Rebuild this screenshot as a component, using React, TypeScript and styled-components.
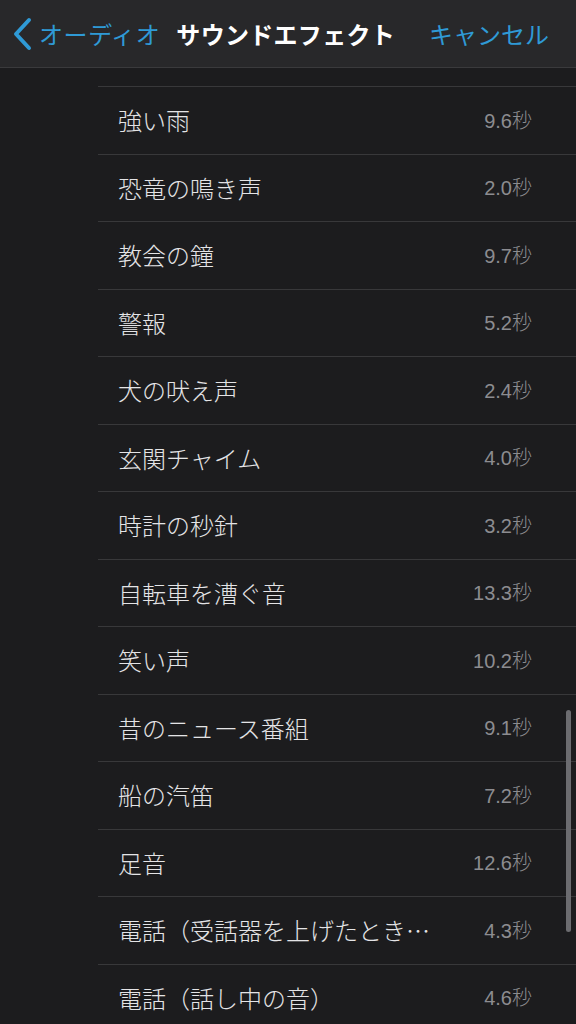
import React from "react";
import styled, { createGlobalStyle } from "styled-components";

const GlobalStyle = createGlobalStyle`
  html, body {
    margin: 0;
    padding: 0;
    background: #1c1c1e;
  }
  body {
    font-family: "Noto Sans CJK JP", "Noto Sans", sans-serif;
    -webkit-font-smoothing: antialiased;
  }
`;

const Screen = styled.div`
  position: relative;
  width: 576px;
  height: 1024px;
  overflow: hidden;
  background: #1c1c1e;
  display: flex;
  flex-direction: column;
`;

const NavBar = styled.header`
  height: 67px;
  flex: 0 0 auto;
  display: flex;
  align-items: center;
  background: #28282a;
  border-bottom: 1px solid #3a3a3c;
  padding: 0 27px 0 12px;
`;

const BackButton = styled.div`
  display: flex;
  align-items: center;
  gap: 5px;
  color: #2f9ad6;
  font-size: 24px;
  font-weight: 400;
  letter-spacing: 0.6px;
  line-height: 1.3;
`;

const Title = styled.div`
  color: #ffffff;
  font-size: 24px;
  font-weight: 700;
  line-height: 1.3;
  letter-spacing: 0.3px;
  margin-left: 16px;
`;

const NavAction = styled.div`
  margin-left: auto;
  color: #2f9ad6;
  font-size: 24px;
  line-height: 1.3;
`;

const List = styled.ul`
  list-style: none;
  margin: 0;
  padding: 18px 0 0 98px;
`;

const Row = styled.li`
  height: 67.5px;
  box-sizing: border-box;
  border-top: 1px solid #38383a;
  display: flex;
  align-items: center;
  padding: 0 44px 0 20px;
  gap: 16px;
`;

const Name = styled.span`
  flex: 1;
  min-width: 0;
  white-space: nowrap;
  overflow: hidden;
  text-overflow: ellipsis;
  color: #e4e4e6;
  font-size: 24px;
  font-weight: 300;
  line-height: 1.4;
`;

const Duration = styled.span`
  flex: 0 0 auto;
  min-width: 70px;
  text-align: right;
  color: #8c8c90;
  font-size: 20px;
  line-height: 1.3;
  font-family: "Liberation Sans", "Noto Sans CJK JP", sans-serif;
`;

const Sec = styled.span`
  font-family: "Noto Sans CJK JP", sans-serif;
  font-weight: 300;
`;

const ScrollThumb = styled.div`
  position: absolute;
  right: 5px;
  top: 710px;
  width: 5px;
  height: 222px;
  border-radius: 3px;
  background: #6c6c70;
`;

const Chevron = () => (
  <svg width="22" height="34" viewBox="0 0 22 34" fill="none">
    <path
      d="M17 3 L4 17 L17 31"
      stroke="#2f9ad6"
      strokeWidth="4"
      strokeLinecap="round"
      strokeLinejoin="round"
    />
  </svg>
);

const items: [string, string][] = [
  ["強い雨", "9.6"],
  ["恐竜の鳴き声", "2.0"],
  ["教会の鐘", "9.7"],
  ["警報", "5.2"],
  ["犬の吠え声", "2.4"],
  ["玄関チャイム", "4.0"],
  ["時計の秒針", "3.2"],
  ["自転車を漕ぐ音", "13.3"],
  ["笑い声", "10.2"],
  ["昔のニュース番組", "9.1"],
  ["船の汽笛", "7.2"],
  ["足音", "12.6"],
  ["電話（受話器を上げたときの音）", "4.3"],
  ["電話（話し中の音）", "4.6"],
];

export default function App() {
  return (
    <>
      <GlobalStyle />
      <Screen>
        <NavBar>
          <BackButton>
            <Chevron />
            <span>オーディオ</span>
          </BackButton>
          <Title>サウンドエフェクト</Title>
          <NavAction>キャンセル</NavAction>
        </NavBar>
        <List>
          {items.map(([name, d]) => (
            <Row key={name}>
              <Name>{name}</Name>
              <Duration>
                {d}
                <Sec>秒</Sec>
              </Duration>
            </Row>
          ))}
        </List>
        <ScrollThumb />
      </Screen>
    </>
  );
}
